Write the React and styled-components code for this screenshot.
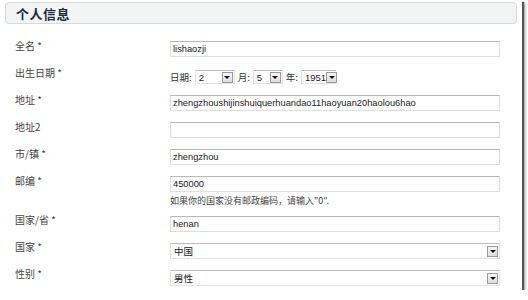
import React from "react";
import styled, { createGlobalStyle } from "styled-components";

const GlobalStyle = createGlobalStyle`
  html, body {
    margin: 0;
    padding: 0;
    background: #fff;
  }
  body {
    font-family: "Liberation Sans", "Noto Sans CJK SC", sans-serif;
    font-size: 10px;
    color: #333;
  }
`;

const Sheet = styled.div`
  width: 522px;
  height: 290px;
  background: #fff;
  box-shadow: 2px 2px 1px #555, 3px 3px 3px rgba(0, 0, 0, 0.35);
  padding-top: 2px;
  box-sizing: border-box;
`;

const Header = styled.div`
  margin-left: 5px;
  width: 512px;
  height: 22px;
  box-sizing: border-box;
  border: 1px solid #d9d9d9;
  border-radius: 4px;
  background: #f3f4f4;
  display: flex;
  align-items: center;
  padding-left: 10px;
`;

const Title = styled.h2`
  margin: 0;
  font-family: "Noto Sans CJK SC", sans-serif;
  font-size: 13px;
  font-weight: 700;
  color: #1d2c3a;
  letter-spacing: 0.5px;
`;

const Form = styled.div`
  margin-top: 14px;
  display: flex;
  flex-direction: column;
`;

const Row = styled.div`
  display: grid;
  grid-template-columns: 155px 330px;
  padding-left: 15px;
  min-height: ${(p) => p.$h || 27}px;
  align-items: start;
`;

const Label = styled.div`
  font-family: "Noto Sans CJK SC", sans-serif;
  font-size: 10px;
  line-height: 16px;
  color: #444;
`;

const Field = styled.div`
  margin-top: ${(p) => p.$top || 3}px;
`;

const Input = styled.div`
  height: 16px;
  box-sizing: border-box;
  border: 1px solid #dedede;
  border-top-color: #b8b8b8;
  padding: 0 2px;
  line-height: 14px;
  font-size: 9.3px;
  color: #222;
  white-space: nowrap;
  overflow: hidden;
`;

const Hint = styled.div`
  margin-top: 2px;
  font-family: "Noto Sans CJK SC", sans-serif;
  font-size: 9px;
  line-height: 13px;
  color: #444;
`;

const DateLine = styled.div`
  display: flex;
  align-items: center;
  gap: 3px;
`;

const DateWord = styled.span`
  font-family: "Noto Sans CJK SC", sans-serif;
  font-size: 9.5px;
  color: #333;
  line-height: 12px;
`;

const Select = styled.div`
  width: ${(p) => p.$w}px;
  height: ${(p) => p.$h || 14}px;
  box-sizing: border-box;
  border: 1px solid #e2e2e2;
  border-top-color: #bdbdbd;
  display: flex;
  align-items: center;
  justify-content: space-between;
  padding: 0 1px 0 3px;
  font-family: "Liberation Sans", "Noto Sans CJK SC", sans-serif;
  font-size: 9.5px;
  color: #222;
`;

const Drop = styled.span`
  width: 11px;
  height: 11px;
  flex-shrink: 0;
  box-sizing: border-box;
  border: 1px solid #9a9a9a;
  background: linear-gradient(#f7f7f7, #dcdcdc);
  display: flex;
  align-items: center;
  justify-content: center;
  &::after {
    content: "";
    border-left: 3px solid transparent;
    border-right: 3px solid transparent;
    border-top: 3px solid #111;
  }
`;

const fields = [
  { label: "全名 *", value: "lishaozji" },
  { label: "出生日期 *", date: true },
  { label: "地址 *", value: "zhengzhoushijinshuiquerhuandao11haoyuan20haolou6hao" },
  { label: "地址2", value: "" },
  { label: "市/镇 *", value: "zhengzhou" },
  { label: "邮编 *", value: "450000", hint: "如果你的国家没有邮政编码，请输入\"0\"." },
  { label: "国家/省 *", value: "henan", top: 4 },
  { label: "国家 *", select: "中国", top: 4 },
  { label: "性别 *", select: "男性", top: 4 },
];

export default function App() {
  return (
    <>
      <GlobalStyle />
      <Sheet>
        <Header>
          <Title>个人信息</Title>
        </Header>
        <Form>
          {fields.map((f) => (
            <Row key={f.label} $h={f.hint ? 39 : 27}>
              <Label>{f.label}</Label>
              {f.date ? (
                <Field $top={5}>
                  <DateLine>
                    <DateWord>日期:</DateWord>
                    <Select $w={40}>
                      2<Drop />
                    </Select>
                    <DateWord>月:</DateWord>
                    <Select $w={30}>
                      5<Drop />
                    </Select>
                    <DateWord>年:</DateWord>
                    <Select $w={35}>
                      1951<Drop />
                    </Select>
                  </DateLine>
                </Field>
              ) : f.select ? (
                <Field $top={f.top}>
                  <Select $w={330} $h={16}>
                    <span>{f.select}</span>
                    <Drop />
                  </Select>
                </Field>
              ) : (
                <Field $top={f.top}>
                  <Input>{f.value}</Input>
                  {f.hint && <Hint>{f.hint}</Hint>}
                </Field>
              )}
            </Row>
          ))}
        </Form>
      </Sheet>
    </>
  );
}
